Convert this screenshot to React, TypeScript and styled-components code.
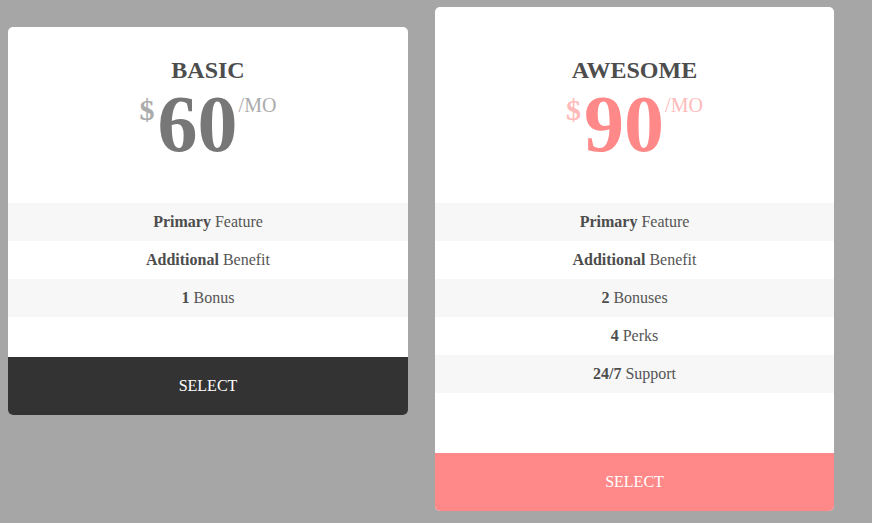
import React from "react";
import styled, { createGlobalStyle } from "styled-components";

const GlobalStyle = createGlobalStyle`
  html, body {
    margin: 0;
    padding: 0;
    background: #a6a6a6;
    font-family: "Liberation Serif", "Times New Roman", serif;
  }
`;

const Page = styled.div`
  display: flex;
  align-items: flex-start;
  gap: 27px;
  padding: 7px 8px;
`;

const Card = styled.div<{ $featured?: boolean }>`
  width: ${(p) => (p.$featured ? "399px" : "400px")};
  margin-top: ${(p) => (p.$featured ? "0" : "20px")};
  background: #fff;
  border-radius: 5px;
  overflow: hidden;
  display: flex;
  flex-direction: column;
`;

const Header = styled.div<{ $featured?: boolean }>`
  padding: ${(p) => (p.$featured ? "49px" : "29px")} 0 39px;
  text-align: center;
`;

const Title = styled.h3`
  margin: 0;
  font-size: 24px;
  line-height: 28px;
  font-weight: bold;
  color: #4d4d4d;
  text-transform: uppercase;
`;

const Price = styled.div`
  display: flex;
  justify-content: center;
  align-items: flex-start;
  line-height: 1;
`;

const Currency = styled.span<{ $accent: string }>`
  font-size: 30px;
  font-weight: bold;
  color: ${(p) => p.$accent};
  margin-top: 11px;
  margin-right: 3px;
`;

const Amount = styled.span<{ $color: string }>`
  font-size: 80px;
  font-weight: bold;
  color: ${(p) => p.$color};
`;

const Period = styled.span<{ $accent: string }>`
  font-size: 20px;
  color: ${(p) => p.$accent};
  margin-top: 11px;
  margin-left: 1px;
`;

const Features = styled.ul<{ $featured?: boolean }>`
  list-style: none;
  margin: 0;
  padding: 0 0 ${(p) => (p.$featured ? "60px" : "40px")};
`;

const Feature = styled.li`
  padding: 10px 0;
  font-size: 16px;
  line-height: 18px;
  text-align: center;
  color: #555;
  &:nth-child(odd) {
    background: #f7f7f7;
  }
  b {
    color: #4d4d4d;
  }
`;

const SelectButton = styled.button<{ $bg: string }>`
  display: block;
  width: 100%;
  border: none;
  margin: 0;
  padding: 20px 0;
  background: ${(p) => p.$bg};
  color: #fff;
  font-family: "Liberation Serif", "Times New Roman", serif;
  font-size: 16px;
  line-height: 18px;
  text-transform: uppercase;
  cursor: pointer;
`;

type Plan = {
  name: string;
  price: string;
  featured?: boolean;
  color: string;
  accent: string;
  button: string;
  features: [string, string][];
};

const plans: Plan[] = [
  {
    name: "Basic",
    price: "60",
    color: "#777777",
    accent: "#ababab",
    button: "#333333",
    features: [
      ["Primary", "Feature"],
      ["Additional", "Benefit"],
      ["1", "Bonus"],
    ],
  },
  {
    name: "Awesome",
    price: "90",
    featured: true,
    color: "#ff8888",
    accent: "#ffbaba",
    button: "#ff8888",
    features: [
      ["Primary", "Feature"],
      ["Additional", "Benefit"],
      ["2", "Bonuses"],
      ["4", "Perks"],
      ["24/7", "Support"],
    ],
  },
];

export default function App() {
  return (
    <>
      <GlobalStyle />
      <Page>
        {plans.map((plan) => (
          <Card key={plan.name} $featured={plan.featured}>
            <Header $featured={plan.featured}>
              <Title>{plan.name}</Title>
              <Price>
                <Currency $accent={plan.accent}>$</Currency>
                <Amount $color={plan.color}>{plan.price}</Amount>
                <Period $accent={plan.accent}>/MO</Period>
              </Price>
            </Header>
            <Features $featured={plan.featured}>
              {plan.features.map(([strong, rest]) => (
                <Feature key={strong + rest}>
                  <b>{strong}</b> {rest}
                </Feature>
              ))}
            </Features>
            <SelectButton $bg={plan.button}>Select</SelectButton>
          </Card>
        ))}
      </Page>
    </>
  );
}
